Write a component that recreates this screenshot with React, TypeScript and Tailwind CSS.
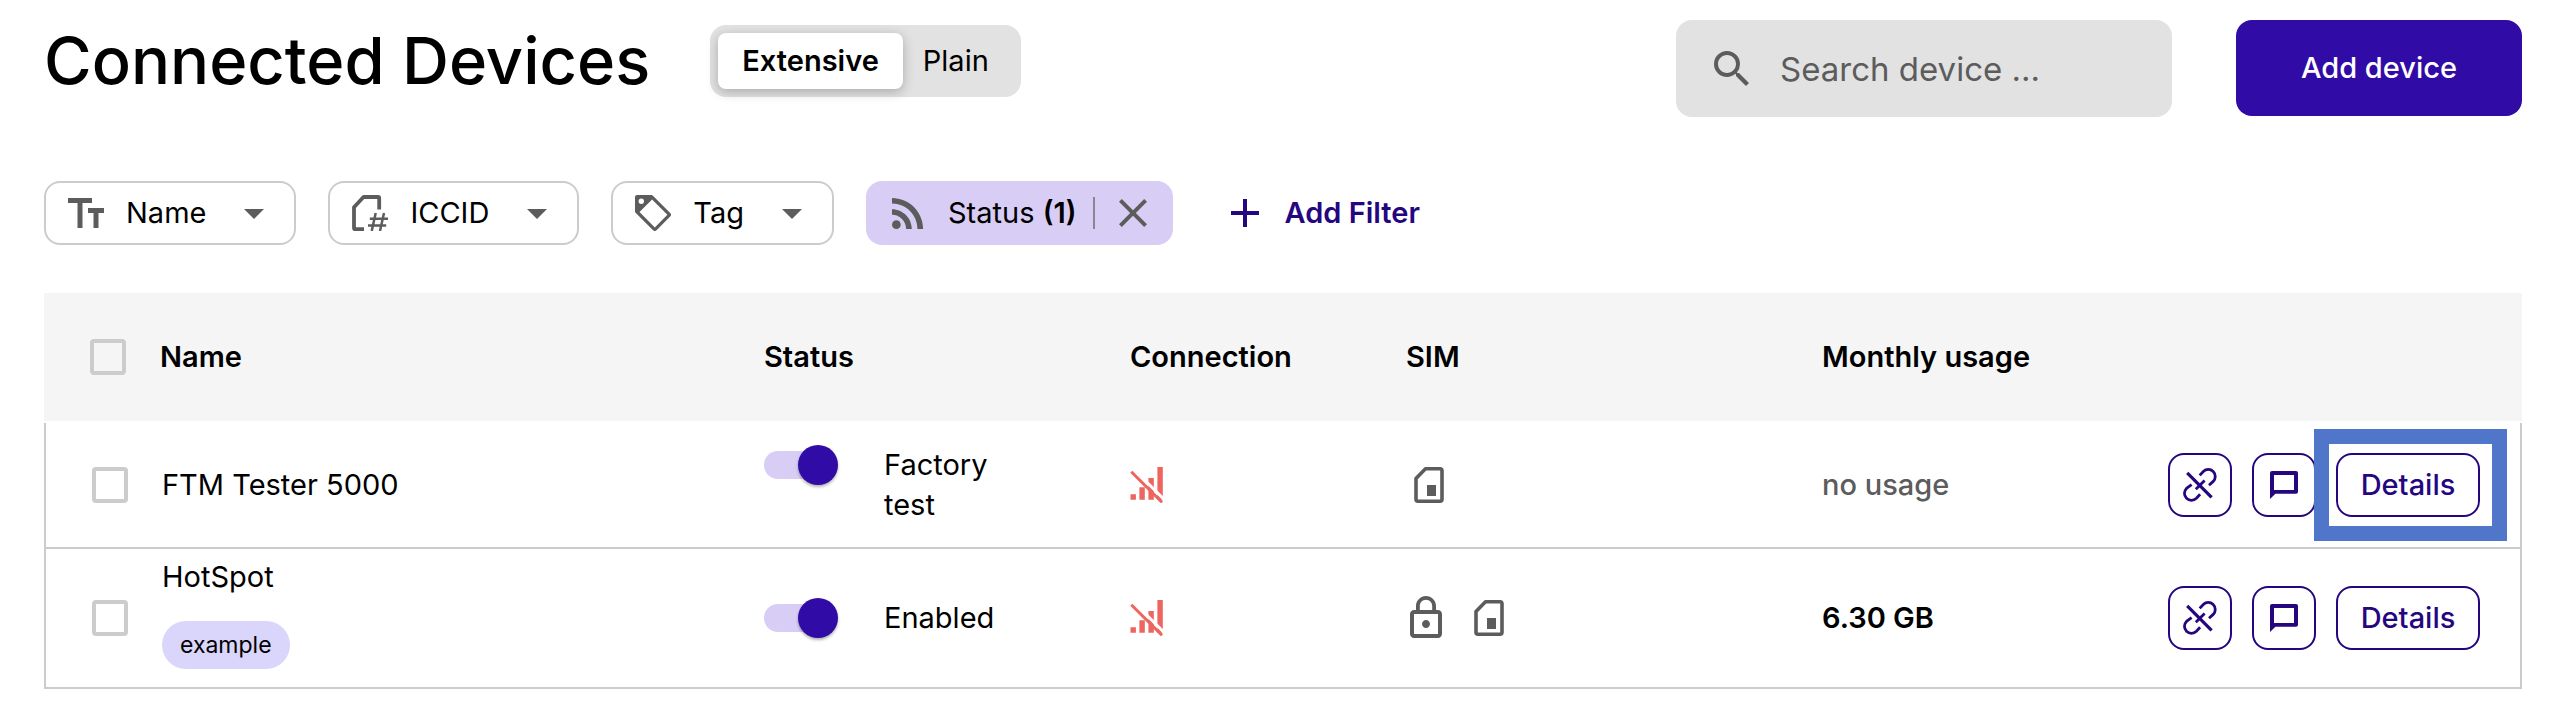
import React from "react";
import {
  MdAdd,
  MdArrowDropDown,
  MdClose,
  MdLockOutline,
  MdRssFeed,
  MdSearch,
} from "react-icons/md";

function TextSizeIcon() {
  return (
    <svg viewBox="0 0 36 30" className="h-[30px] w-9 fill-current" aria-hidden="true">
      <path d="M0 0h24v5h-9.5v25h-5V5H0zM20 10h16v5h-5.5v15h-5V15H20z" />
    </svg>
  );
}

function SimHashIcon() {
  return (
    <svg viewBox="0 0 36 36" className="size-9 fill-none stroke-current" aria-hidden="true">
      <path
        strokeWidth="3.8"
        strokeLinejoin="round"
        d="M12 34.1H3.2a1.2 1.2 0 0 1-1.2-1.2V12.2L11.5 2H26a1.2 1.2 0 0 1 1.2 1.2V14.5"
      />
      <path
        strokeWidth="2.5"
        d="M23.7 18l-4 18M32 18l-4 18M17.8 23.8H36M16 30.6h18.2"
      />
    </svg>
  );
}

function TagIcon() {
  return (
    <svg viewBox="2 2 20 20" className="size-9 fill-current" aria-hidden="true">
      <path d="M5.5,7A1.5,1.5 0 0,0 7,5.5A1.5,1.5 0 0,0 5.5,4A1.5,1.5 0 0,0 4,5.5A1.5,1.5 0 0,0 5.5,7M21.41,11.9C21.9,12.4 22,12.6 22,13C22,13.4 21.9,13.6 21.41,14.1L14.1,21.41C13.6,21.9 13.4,22 13,22C12.6,22 12.4,21.9 11.9,21.41L2.59,12.1C2.1,11.6 2,11.4 2,11V3.2C2,2.5 2.5,2 3.2,2H11C11.4,2 11.6,2.1 12.1,2.59L21.41,11.9M13,20L20,13L11.5,4.5L4.5,11.5L13,20Z" />
    </svg>
  );
}

function SimIcon() {
  return (
    <svg viewBox="0 0 30 36" className="h-9 w-[30px] text-[#5c5c5c]" aria-label="SIM card" role="img">
      <path
        fill="none"
        stroke="currentColor"
        strokeWidth="3.6"
        strokeLinejoin="round"
        d="M2 11.5L11.5 1.8H26a2 2 0 0 1 2 2V32.2a2 2 0 0 1-2 2H4a2 2 0 0 1-2-2z"
      />
      <path fill="currentColor" d="M13 18h9v11h-9z" />
    </svg>
  );
}

function NoSignalIcon() {
  return (
    <svg viewBox="0 0 34 36" className="h-9 w-[34px]" aria-label="Not connected" role="img">
      <path
        className="fill-[#ee6560]"
        d="M.5 27.3h5.4v5.4H.5zM9.4 20.2h5.4v12.5H9.4zM18.4 11h5.4v21.7h-5.4zM27.4 0h5.4v32.7h-5.4z"
      />
      <path className="stroke-white" strokeWidth="3" d="M4 2.3l31.5 31.5" />
      <path className="stroke-[#ee6560]" strokeWidth="3" d="M1.3 4.8L32 35.3" />
    </svg>
  );
}

function UnlinkIcon() {
  return (
    <svg
      viewBox="0 0 34 34"
      className="size-[34px] fill-none stroke-current"
      strokeWidth="2.8"
      aria-hidden="true"
    >
      <path d="M16.7 7.4l3.6-3.9a7 7 0 0 1 9.9 9.9l-4.2 3.8" />
      <path d="M8.6 16.6l-5.1 3.8a7 7 0 0 0 9.9 9.9l3.7-4" />
      <path d="M12.8 21.2l8.8-8.8" />
      <path strokeWidth="3.2" d="M4.2 4.8l24.4 24.6" />
    </svg>
  );
}

function MessageIcon() {
  return (
    <svg viewBox="0 0 28 28" className="size-7 fill-current" aria-hidden="true">
      <path
        fillRule="evenodd"
        d="M2 0h24a2 2 0 0 1 2 2v18.7a2 2 0 0 1-2 2H5.4L0 28V2a2 2 0 0 1 2-2zM4 4v15h20V4z"
      />
    </svg>
  );
}

function FilterChip({ icon, label }: { icon: React.ReactNode; label: string }) {
  return (
    <button
      type="button"
      className="flex h-16 items-center rounded-2xl border-2 border-[#cccccc] pr-4 pl-[22px] text-[#5c5c5c]"
    >
      {icon}
      <span className="ml-[22px] text-black">{label}</span>
      <MdArrowDropDown className="ml-6 size-12" aria-hidden="true" />
    </button>
  );
}

function Checkbox({ label }: { label: string }) {
  return (
    <input
      type="checkbox"
      aria-label={label}
      className="block size-9 appearance-none rounded-sm border-4 border-[#cccccc] checked:bg-[#300ba6]"
    />
  );
}

function Toggle({ label }: { label: string }) {
  return (
    <label className="flex items-start gap-[46px]">
      <input type="checkbox" role="switch" defaultChecked className="peer sr-only" />
      <span className="flex h-10 w-[74px] shrink-0 items-center" aria-hidden="true">
        <span className="h-7 w-16 rounded-full bg-[#d8cdf5]" />
        <span className="-ml-[30px] size-10 shrink-0 rounded-full bg-[#300ba6] shadow-[0_2px_3px_rgba(0,0,0,0.3)]" />
      </span>
      <span className="max-w-36">{label}</span>
    </label>
  );
}

const outlineButton =
  "flex h-16 items-center justify-center rounded-2xl border-2 border-[#25067f] text-[#25067f]";

type Device = {
  name: string;
  tag?: string;
  status: string;
  locked: boolean;
  usage: string;
  highlighted: boolean;
};

const devices: Device[] = [
  { name: "FTM Tester 5000", status: "Factory test", locked: false, usage: "no usage", highlighted: true },
  { name: "HotSpot", tag: "example", status: "Enabled", locked: true, usage: "6.30 GB", highlighted: false },
];

function DeviceRow({ device }: { device: Device }) {
  return (
    <tr className="*:h-[126px] *:border-b-2 *:border-[#cccccc] *:p-0 *:align-middle">
      <td className="border-l-2">
        <div className="pl-[46px]">
          <Checkbox label={`Select ${device.name}`} />
        </div>
      </td>
      <td>
        <div className={device.tag ? "pt-2 pb-[18px] pl-0.5" : "pl-0.5"}>
          <div>{device.name}</div>
          {device.tag && (
            <span className="mt-6 flex h-12 w-fit items-center rounded-full bg-[#dad5fb] px-[18px] text-[23px]">
              {device.tag}
            </span>
          )}
        </div>
      </td>
      <td>
        <Toggle label={device.status} />
      </td>
      <td>
        <NoSignalIcon />
      </td>
      <td>
        {device.locked ? (
          <div className="-ml-1 flex items-center gap-6">
            <MdLockOutline className="size-12 text-[#5c5c5c]" aria-label="Locked" />
            <SimIcon />
          </div>
        ) : (
          <div className="pl-2">
            <SimIcon />
          </div>
        )}
      </td>
      <td className={device.highlighted ? "font-medium text-[#5c5c5c]" : "font-semibold"}>
        {device.usage}
      </td>
      <td className="border-r-2">
        <div className="flex justify-end gap-5 pr-10">
          <button type="button" aria-label="Unlink device" className={`${outlineButton} w-16`}>
            <UnlinkIcon />
          </button>
          <button type="button" aria-label="Send message" className={`${outlineButton} w-16`}>
            <MessageIcon />
          </button>
          <div className="relative">
            <button type="button" className={`${outlineButton} w-36 font-medium`}>
              Details
            </button>
            {device.highlighted && (
              <span className="pointer-events-none absolute -top-6 -right-[27px] -bottom-6 -left-[22px] border-[15px] border-[#4f76c8]" />
            )}
          </div>
        </div>
      </td>
    </tr>
  );
}

export default function App() {
  return (
    <main className="min-h-screen bg-white pt-5 pr-[42px] pb-9 pl-[44px] font-['Inter',sans-serif] text-[29px] leading-10 text-black">
      <header className="flex items-start justify-between">
        <div className="flex items-start gap-[60px]">
          <h1 className="text-[65px] leading-[82px] font-medium">Connected Devices</h1>
          <div className="mt-[5px] flex h-[72px] items-center rounded-2xl bg-[#e2e2e2] pr-3 pl-2">
            <button
              type="button"
              className="h-14 rounded-lg bg-white px-6 font-semibold shadow-[0_3px_12px_rgba(0,0,0,0.25)]"
            >
              Extensive
            </button>
            <button type="button" className="h-14 px-5">
              Plain
            </button>
          </div>
        </div>
        <div className="flex items-start gap-16">
          <label className="flex h-[97px] w-[496px] items-center rounded-2xl bg-[#e2e2e2] pl-8 text-[#5c5c5c]">
            <MdSearch className="size-12 shrink-0" aria-hidden="true" />
            <input
              type="search"
              aria-label="Search device"
              placeholder="Search device ..."
              className="ml-6 w-full min-w-0 bg-transparent text-[33px] outline-none placeholder:text-[#5c5c5c]"
            />
          </label>
          <button
            type="button"
            className="h-24 w-[286px] rounded-2xl bg-[#300ba6] font-medium text-white"
          >
            Add device
          </button>
        </div>
      </header>

      <div className="mt-16 flex items-center gap-8">
        <FilterChip icon={<TextSizeIcon />} label="Name" />
        <FilterChip icon={<SimHashIcon />} label="ICCID" />
        <FilterChip icon={<TagIcon />} label="Tag" />
        <div className="flex h-16 items-center rounded-2xl bg-[#d8cdf5] pr-4 pl-[18px] text-[#5c5c5c]">
          <MdRssFeed className="size-12" aria-hidden="true" />
          <span className="ml-4 text-black">
            Status <span className="font-semibold">(1)</span>
          </span>
          <span className="mr-3.5 ml-4 h-8 w-0.5 bg-[#8a8595]" aria-hidden="true" />
          <button type="button" aria-label="Remove status filter">
            <MdClose className="size-12" />
          </button>
        </div>
        <button type="button" className="ml-4 flex h-16 items-center gap-4 font-semibold text-[#25067f]">
          <MdAdd className="size-12" aria-hidden="true" />
          Add Filter
        </button>
      </div>

      <table className="mt-12 w-full table-fixed border-separate border-spacing-0 text-left">
        <colgroup>
          <col className="w-[116px]" />
          <col className="w-[604px]" />
          <col className="w-[366px]" />
          <col className="w-[276px]" />
          <col className="w-[416px]" />
          <col className="w-[260px]" />
          <col className="w-[440px]" />
        </colgroup>
        <thead>
          <tr className="*:h-[130px] *:border-b-2 *:border-white *:bg-[#f5f5f5] *:bg-clip-padding *:p-0 *:align-middle *:font-semibold">
            <th>
              <div className="pl-[46px]">
                <Checkbox label="Select all devices" />
              </div>
            </th>
            <th>Name</th>
            <th>Status</th>
            <th>Connection</th>
            <th>SIM</th>
            <th>Monthly usage</th>
            <th aria-label="Actions" />
          </tr>
        </thead>
        <tbody>
          {devices.map((device) => (
            <DeviceRow key={device.name} device={device} />
          ))}
        </tbody>
      </table>
    </main>
  );
}
